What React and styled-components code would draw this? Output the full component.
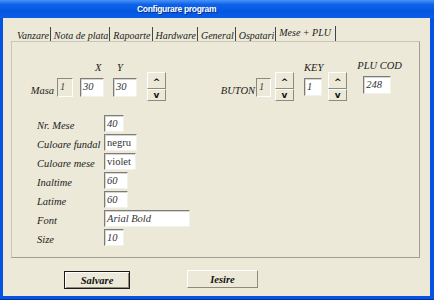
import React from 'react'
import styled, {createGlobalStyle} from 'styled-components'

const GlobalStyle = createGlobalStyle`
html, body {
    margin: 0;
    padding: 0;
    background: #ECE9D8;
}
`

const tabs = ['Vanzare', 'Nota de plata', 'Rapoarte', 'Hardware', 'General', 'Ospatari', 'Mese + PLU']

const rows = [
    {label: 'Nr. Mese', value: '40', width: 20, italic: true},
    {label: 'Culoare fundal', value: 'negru', width: 33},
    {label: 'Culoare mese', value: 'violet', width: 32},
    {label: 'Inaltime', value: '60', width: 24, italic: true},
    {label: 'Latime', value: '60', width: 24, italic: true},
    {label: 'Font', value: 'Arial Bold', width: 86, italic: true},
    {label: 'Size', value: '10', width: 20, italic: true},
]

function Spinner({ml}) {
    return (
        <SpinBox ml={ml}>
            <SpinButton>^</SpinButton>
            <SpinButton down>v</SpinButton>
        </SpinBox>
    )
}

function App() {
  return (
    <Window>
        <GlobalStyle />
        <TitleBar>Configurare program</TitleBar>
        <Body>
            <TabStrip>
                {tabs.map(t => (
                    <Tab key={t} active={t === 'Mese + PLU'}>{t}</Tab>
                ))}
            </TabStrip>
            <Panel>
                <TopRow>
                    <InlineLabel ml={17} w={25}>Masa</InlineLabel>
                    <ReadBox ml={3} w={16}>1</ReadBox>
                    <Column ml={7}>
                        <Caption pl={15}>X</Caption>
                        <Box w={24} h={19} italic>30</Box>
                    </Column>
                    <Column ml={9}>
                        <Caption pl={4}>Y</Caption>
                        <Box w={24} h={19} italic>30</Box>
                    </Column>
                    <Spinner ml={10} />
                    <InlineLabel ml={50} w={39}>BUTON</InlineLabel>
                    <ReadBox ml={1} w={15}>1</ReadBox>
                    <Spinner ml={4} />
                    <Column ml={10} mb={5}>
                        <Caption pl={0}>KEY</Caption>
                        <Box w={18} h={18} italic>1</Box>
                    </Column>
                    <Spinner ml={5} />
                    <Column ml={10} mb={7}>
                        <Caption pl={0}>PLU COD</Caption>
                        <Box w={28} h={18} ml={6} italic>248</Box>
                    </Column>
                </TopRow>
                <Form>
                    {rows.map(r => (
                        <React.Fragment key={r.label}>
                            <FormLabel>{r.label}</FormLabel>
                            <Box w={r.width} h={17} italic={r.italic}>{r.value}</Box>
                        </React.Fragment>
                    ))}
                </Form>
            </Panel>
            <ButtonRow>
                <Button w={66} isDefault>Salvare</Button>
                <Button w={71}>Iesire</Button>
            </ButtonRow>
        </Body>
    </Window>
  )
}
export default App

const serif = `"Liberation Serif", "Times New Roman", serif`

const Window = styled.div`
width: 434px;
height: 300px;
box-sizing: border-box;
display: flex;
flex-direction: column;
background: #0553e1;
padding: 0 4px 3px 3px;
border-bottom: 1px solid #0a2f9c;
`
const TitleBar = styled.div`
height: 18px;
margin: 0 -4px 0 -3px;
padding-left: 137px;
display: flex;
align-items: center;
color: #fff;
font-family: "Liberation Sans", Arial, sans-serif;
font-weight: bold;
font-size: 8.5px;
letter-spacing: -0.3px;
background: linear-gradient(#4a92f7 0%, #0d63e8 25%, #0457e3 60%, #0a5de6 100%);
text-shadow: 1px 1px #0a2f8c;
`
const Body = styled.div`
flex: 1;
background: #ECE9D8;
display: flex;
flex-direction: column;
`
const TabStrip = styled.div`
display: flex;
margin: 9px 0 0 11px;
height: 14px;
align-items: stretch;
`
const Tab = styled.div`
font-family: ${serif};
font-style: italic;
font-size: 10px;
color: #222;
padding: ${p => p.active ? '0 4px 3px 3px' : '3px 1px 0 3px'};
margin-top: ${p => p.active ? '-1px' : '0'};
border-right: 1px solid #444;
display: flex;
align-items: center;
line-height: 11px;
white-space: nowrap;
`
const Panel = styled.div`
margin: 0 0 0 8px;
width: 409px;
height: 217px;
box-sizing: border-box;
border: 1px solid #a09e8e;
border-top-color: #c8c6b6;
border-left-color: #c8c6b6;
display: flex;
flex-direction: column;
`
const TopRow = styled.div`
display: flex;
align-items: flex-end;
height: 40px;
margin-top: 19px;
`
const InlineLabel = styled.div`
font-family: ${serif};
font-style: italic;
font-size: 10.5px;
color: #222;
width: ${p => p.w}px;
text-align: right;
margin-left: ${p => p.ml}px;
margin-bottom: 4px;
line-height: 13px;
white-space: nowrap;
`
const Column = styled.div`
display: flex;
flex-direction: column;
margin-left: ${p => p.ml}px;
margin-bottom: ${p => p.mb ?? 4}px;
`
const Caption = styled.div`
font-family: ${serif};
font-style: italic;
font-size: 10.5px;
color: #222;
line-height: 12px;
padding-left: ${p => p.pl}px;
margin-bottom: 4px;
white-space: nowrap;
`
const Box = styled.div`
width: ${p => p.w}px;
height: ${p => p.h}px;
margin-left: ${p => p.ml ?? 0}px;
box-sizing: border-box;
background: #fff;
border-top: 1px solid #7c7c7c;
border-left: 1px solid #7c7c7c;
border-right: 1px solid #f2f1ea;
border-bottom: 1px solid #f2f1ea;
box-shadow: inset 1px 1px #d8d6cc;
font-family: ${serif};
font-style: ${p => p.italic ? 'italic' : 'normal'};
font-size: 10.5px;
color: #333;
padding: 1px 0 0 2px;
line-height: 13px;
white-space: nowrap;
overflow: hidden;
`
const ReadBox = styled.div`
width: ${p => p.w}px;
height: 19px;
margin-left: ${p => p.ml}px;
margin-bottom: 4px;
box-sizing: border-box;
border-top: 1px solid #8a8a80;
border-left: 1px solid #8a8a80;
border-right: 1px solid #fff;
border-bottom: 1px solid #fff;
font-family: ${serif};
font-style: italic;
font-size: 10.5px;
color: #444;
padding: 1px 0 0 2px;
line-height: 13px;
`
const SpinBox = styled.div`
display: flex;
flex-direction: column;
margin-left: ${p => p.ml}px;
width: 19px;
height: 29px;
`
const SpinButton = styled.div`
flex: 1;
box-sizing: border-box;
border-top: 1px solid #fff;
border-left: 1px solid #fff;
border-right: 1px solid #8d8b7d;
border-bottom: 1px solid #8d8b7d;
background: #ECE9D8;
display: flex;
align-items: center;
justify-content: center;
font-family: "DejaVu Sans", sans-serif;
font-weight: bold;
font-size: ${p => p.down ? '9px' : '9px'};
padding-top: ${p => p.down ? '0' : '4px'};
color: #111;
`
const Form = styled.div`
display: grid;
grid-template-columns: 67px auto;
grid-auto-rows: 19px;
justify-items: start;
align-items: center;
margin: 13px 0 0 25px;
`
const FormLabel = styled.div`
font-family: ${serif};
font-style: italic;
font-size: 10.5px;
color: #222;
padding-top: 3px;
white-space: nowrap;
`
const ButtonRow = styled.div`
display: flex;
gap: 57px;
margin: 12px 0 0 61px;
`
const Button = styled.div`
width: ${p => p.w}px;
height: 18px;
box-sizing: border-box;
background: #ECE9D8;
border: 1px solid ${p => p.isDefault ? '#1b1b1b' : '#fff'};
border-right-color: ${p => p.isDefault ? '#1b1b1b' : '#8d8b7d'};
border-bottom-color: ${p => p.isDefault ? '#1b1b1b' : '#8d8b7d'};
box-shadow: ${p => p.isDefault ? 'inset 1px 1px #fff, inset -1px -1px #8d8b7d' : 'none'};
font-family: ${serif};
font-style: italic;
font-weight: bold;
font-size: 10.5px;
color: #111;
display: flex;
align-items: center;
justify-content: center;
margin-top: ${p => p.isDefault ? '1px' : '0'};
`
